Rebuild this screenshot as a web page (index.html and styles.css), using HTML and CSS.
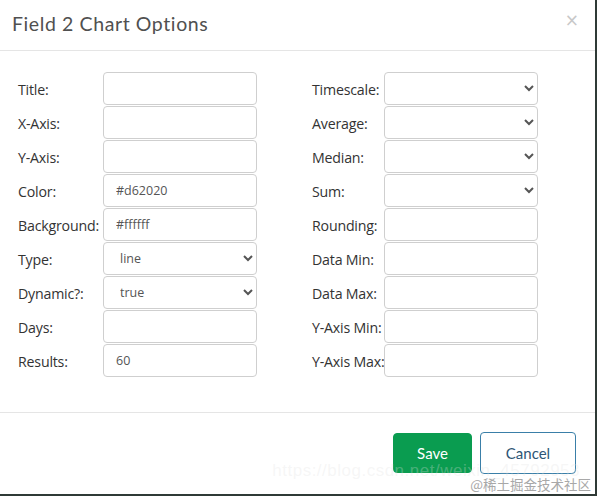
FILE: index.html
```html
<!DOCTYPE html>
<html>
<head>
<meta charset="utf-8">
<link rel="stylesheet" href="styles.css">
</head>
<body>
<div class="modal">
  <div class="modal-header">
    <h4 class="modal-title">Field 2 Chart Options</h4>
    <span class="close">&times;</span>
  </div>
  <div class="modal-body">
    <div class="col">
      <div class="row"><label>Title:</label><input class="ctl" type="text"></div>
      <div class="row"><label>X-Axis:</label><input class="ctl" type="text"></div>
      <div class="row"><label>Y-Axis:</label><input class="ctl" type="text"></div>
      <div class="row"><label>Color:</label><input class="ctl" type="text" value="#d62020"></div>
      <div class="row"><label>Background:</label><input class="ctl" type="text" value="#ffffff"></div>
      <div class="row"><label>Type:</label><select class="ctl sel"><option>line</option></select></div>
      <div class="row"><label>Dynamic?:</label><select class="ctl sel"><option>true</option></select></div>
      <div class="row"><label>Days:</label><input class="ctl" type="text"></div>
      <div class="row"><label>Results:</label><input class="ctl" type="text" value="60"></div>
    </div>
    <div class="col right">
      <div class="row"><label>Timescale:</label><select class="ctl sel"><option></option></select></div>
      <div class="row"><label>Average:</label><select class="ctl sel"><option></option></select></div>
      <div class="row"><label>Median:</label><select class="ctl sel"><option></option></select></div>
      <div class="row"><label>Sum:</label><select class="ctl sel"><option></option></select></div>
      <div class="row"><label>Rounding:</label><input class="ctl" type="text"></div>
      <div class="row"><label>Data Min:</label><input class="ctl" type="text"></div>
      <div class="row"><label>Data Max:</label><input class="ctl" type="text"></div>
      <div class="row"><label>Y-Axis Min:</label><input class="ctl" type="text"></div>
      <div class="row"><label>Y-Axis Max:</label><input class="ctl" type="text"></div>
    </div>
  </div>
  <div class="modal-footer">
    <button class="btn btn-save">Save</button>
    <button class="btn btn-cancel">Cancel</button>
  </div>
  <div class="wm-url">https://blog.csdn.net/weixin_45792953</div>
  <div class="wm-cn">@稀土掘金技术社区</div>
</div>
</body>
</html>
```

FILE: styles.css
```css
html, body {
  margin: 0;
  padding: 0;
  background: #2f3a36;
  width: 597px;
  height: 496px;
  overflow: hidden;
}
.modal {
  position: relative;
  width: 595px;
  height: 494px;
  background: #fff;
  font-family: "Open Sans", "Liberation Sans", sans-serif;
  color: #333;
  display: flex;
  flex-direction: column;
}
.modal-header {
  height: 51px;
  border-bottom: 1px solid #e5e5e5;
  display: flex;
  align-items: center;
  justify-content: space-between;
  padding: 0 16px 0 12px;
  box-sizing: border-box;
}
.modal-title {
  margin: 0;
  font-family: Lato, "Noto Sans", sans-serif;
  font-weight: 400;
  font-size: 19.5px;
  letter-spacing: 0.6px;
  color: #505050;
  margin-top: -4px;
}
.close {
  font-size: 17px;
  color: #c8c8c8;
  margin-top: -10px;
  font-family: "DejaVu Sans", sans-serif;
}
.modal-body {
  display: flex;
  gap: 55px;
  padding: 21px 0 35px 18px;
}
.col {
  display: flex;
  flex-direction: column;
  gap: 1px;
}
.row {
  display: flex;
  align-items: center;
  height: 33px;
}
.row label {
  width: 85px;
  font-size: 14.2px;
  color: #333;
  letter-spacing: -0.2px;
  white-space: nowrap;
  padding-top: 2px;
}
.right .row label {
  width: 72px;
}
.ctl {
  box-sizing: border-box;
  width: 154px;
  height: 33px;
  border: 1px solid #cfcfcf;
  border-radius: 4px;
  padding: 0 12px;
  font-family: "Open Sans", sans-serif;
  font-size: 12.5px;
  color: #555;
  background: #fff;
  margin: 0;
}
.sel {
  padding-left: 12px;
}
.modal-footer {
  border-top: 1px solid #e5e5e5;
  display: flex;
  justify-content: flex-end;
  gap: 8px;
  padding: 19px 19px 0 0;
}
.btn {
  font-family: Lato, "Noto Sans", sans-serif;
  font-size: 15px;
  border-radius: 4px;
  cursor: pointer;
}
.btn-save {
  width: 79px;
  height: 40px;
  background: #0a9c50;
  border: 1px solid #0a9c50;
  color: #fff;
  margin-top: 1px;
}
.btn-cancel {
  width: 96px;
  height: 42px;
  background: #fff;
  border: 1px solid #3a7fa8;
  color: #2e5675;
}
.wm-url {
  position: absolute;
  left: 20px;
  top: 461px;
  width: 560px;
  text-align: right;
  font-family: "Liberation Sans", sans-serif;
  font-size: 17px;
  color: rgba(225, 225, 225, 0.3);
  letter-spacing: 0.5px;
  pointer-events: none;
}
.wm-cn {
  position: absolute;
  right: 4px;
  top: 474px;
  font-family: "Noto Sans CJK SC", sans-serif;
  font-size: 13.5px;
  color: #a8a8a8;
  pointer-events: none;
}
```
